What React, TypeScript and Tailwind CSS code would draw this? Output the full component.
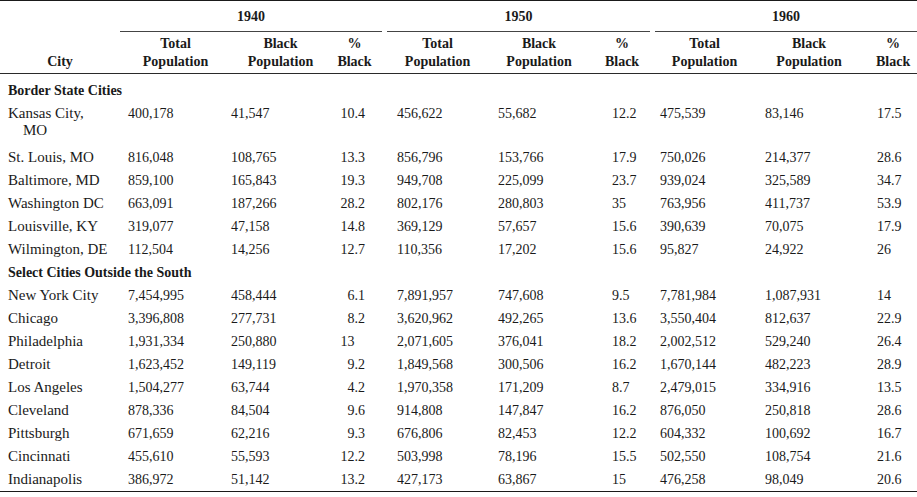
import React from "react";

type Row = string[];

const border: Row[] = [
  ["Kansas City, MO", "400,178", "41,547", "10.4", "456,622", "55,682", "12.2", "475,539", "83,146", "17.5"],
  ["St. Louis, MO", "816,048", "108,765", "13.3", "856,796", "153,766", "17.9", "750,026", "214,377", "28.6"],
  ["Baltimore, MD", "859,100", "165,843", "19.3", "949,708", "225,099", "23.7", "939,024", "325,589", "34.7"],
  ["Washington DC", "663,091", "187,266", "28.2", "802,176", "280,803", "35", "763,956", "411,737", "53.9"],
  ["Louisville, KY", "319,077", "47,158", "14.8", "369,129", "57,657", "15.6", "390,639", "70,075", "17.9"],
  ["Wilmington, DE", "112,504", "14,256", "12.7", "110,356", "17,202", "15.6", "95,827", "24,922", "26"],
];

const outside: Row[] = [
  ["New York City", "7,454,995", "458,444", "6.1", "7,891,957", "747,608", "9.5", "7,781,984", "1,087,931", "14"],
  ["Chicago", "3,396,808", "277,731", "8.2", "3,620,962", "492,265", "13.6", "3,550,404", "812,637", "22.9"],
  ["Philadelphia", "1,931,334", "250,880", "13", "2,071,605", "376,041", "18.2", "2,002,512", "529,240", "26.4"],
  ["Detroit", "1,623,452", "149,119", "9.2", "1,849,568", "300,506", "16.2", "1,670,144", "482,223", "28.9"],
  ["Los Angeles", "1,504,277", "63,744", "4.2", "1,970,358", "171,209", "8.7", "2,479,015", "334,916", "13.5"],
  ["Cleveland", "878,336", "84,504", "9.6", "914,808", "147,847", "16.2", "876,050", "250,818", "28.6"],
  ["Pittsburgh", "671,659", "62,216", "9.3", "676,806", "82,453", "12.2", "604,332", "100,692", "16.7"],
  ["Cincinnati", "455,610", "55,593", "12.2", "503,998", "78,196", "15.5", "502,550", "108,754", "21.6"],
  ["Indianapolis", "386,972", "51,142", "13.2", "427,173", "63,867", "15", "476,258", "98,049", "20.6"],
];

const cellBase = "pt-[3px] align-top leading-[17px] text-[14px]";

function DataRow({ r, last }: { r: Row; last?: boolean }) {
  const city = r[0];
  const isKC = city === "Kansas City, MO";
  const pct1940 = r[3];
  const pb = isKC ? "pb-[7px]" : last ? "pb-[3px]" : "pb-[3px]";
  const c = `${cellBase} ${pb}`;
  return (
    <tr>
      <td className={`${c} pl-2 text-[15px]`}>
        {isKC ? (
          <>
            <span className="block">Kansas City,</span>
            <span className="block pl-[15px]">MO</span>
          </>
        ) : (
          city
        )}
      </td>
      <td className={`${c} pl-2`}>{r[1]}</td>
      <td className={`${c} pl-2`}>{r[2]}</td>
      <td className={`${c} pr-[20px] text-right`}>
        {pct1940}
        {pct1940.includes(".") ? null : <span className="invisible">.0</span>}
      </td>
      <td className={`${c} pl-3`}>{r[4]}</td>
      <td className={`${c} pl-2`}>{r[5]}</td>
      <td className={`${c} pl-2`}>{r[6]}</td>
      <td className={`${c} pl-2`}>{r[7]}</td>
      <td className={`${c} pl-2`}>{r[8]}</td>
      <td className={`${c} pl-2`}>{r[9]}</td>
    </tr>
  );
}

export default function App() {
  const sub = "align-bottom text-center font-bold text-[14px] leading-[18px] pt-[3px] pb-[2px] border-b border-[#2a2a2a]";
  return (
    <div className="w-[917px] bg-white text-[#1a1a1a]" style={{ fontFamily: '"Liberation Serif", "Times New Roman", serif' }}>
      <table className="w-[917px] table-fixed border-collapse border-t-[1.5px] border-[#1a1a1a]">
        <colgroup>
          <col className="w-[120px]" />
          <col className="w-[103px]" />
          <col className="w-[107px]" />
          <col className="w-[55px]" />
          <col className="w-[105px]" />
          <col className="w-[114px]" />
          <col className="w-[48px]" />
          <col className="w-[105px]" />
          <col className="w-[112px]" />
          <col className="w-[48px]" />
        </colgroup>
        <thead>
          <tr>
            <th className="p-0"></th>
            <th colSpan={3} className="p-0 pr-[3px] font-bold text-[14px] leading-[17px]">
              <div className="pt-[7px] pb-[6px] border-b border-[#444]">1940</div>
            </th>
            <th colSpan={3} className="p-0 px-[2px] font-bold text-[14px] leading-[17px]">
              <div className="pt-[7px] pb-[6px] border-b border-[#444]">1950</div>
            </th>
            <th colSpan={3} className="p-0 pl-[3px] font-bold text-[14px] leading-[17px]">
              <div className="pt-[7px] pb-[6px] border-b border-[#444]">1960</div>
            </th>
          </tr>
          <tr>
            <th className={sub}>City</th>
            <th className={`${sub} pl-2`}>Total<br />Population</th>
            <th className={`${sub} pl-2`}>Black<br />Population</th>
            <th className={`${sub} pr-[6px]`}>%<br />Black</th>
            <th className={sub}>Total<br />Population</th>
            <th className={`${sub} pr-4`}>Black<br />Population</th>
            <th className={`${sub} pr-3`}>%<br />Black</th>
            <th className={sub}>Total<br />Population</th>
            <th className={`${sub} pr-2`}>Black<br />Population</th>
            <th className={sub}>%<br />Black</th>
          </tr>
        </thead>
        <tbody className="border-b-[1.5px] border-[#1a1a1a]">
          <tr>
            <td colSpan={10} className="pl-2 pt-[8px] pb-[3px] font-bold text-[14px] leading-[17px]">
              Border State Cities
            </td>
          </tr>
          {border.map((r) => (
            <DataRow key={r[0]} r={r} />
          ))}
          <tr>
            <td colSpan={10} className="pl-2 py-[3px] font-bold text-[14px] leading-[17px]">
              Select Cities Outside the South
            </td>
          </tr>
          {outside.map((r, i) => (
            <DataRow key={r[0]} r={r} last={i === outside.length - 1} />
          ))}
        </tbody>
      </table>
    </div>
  );
}
